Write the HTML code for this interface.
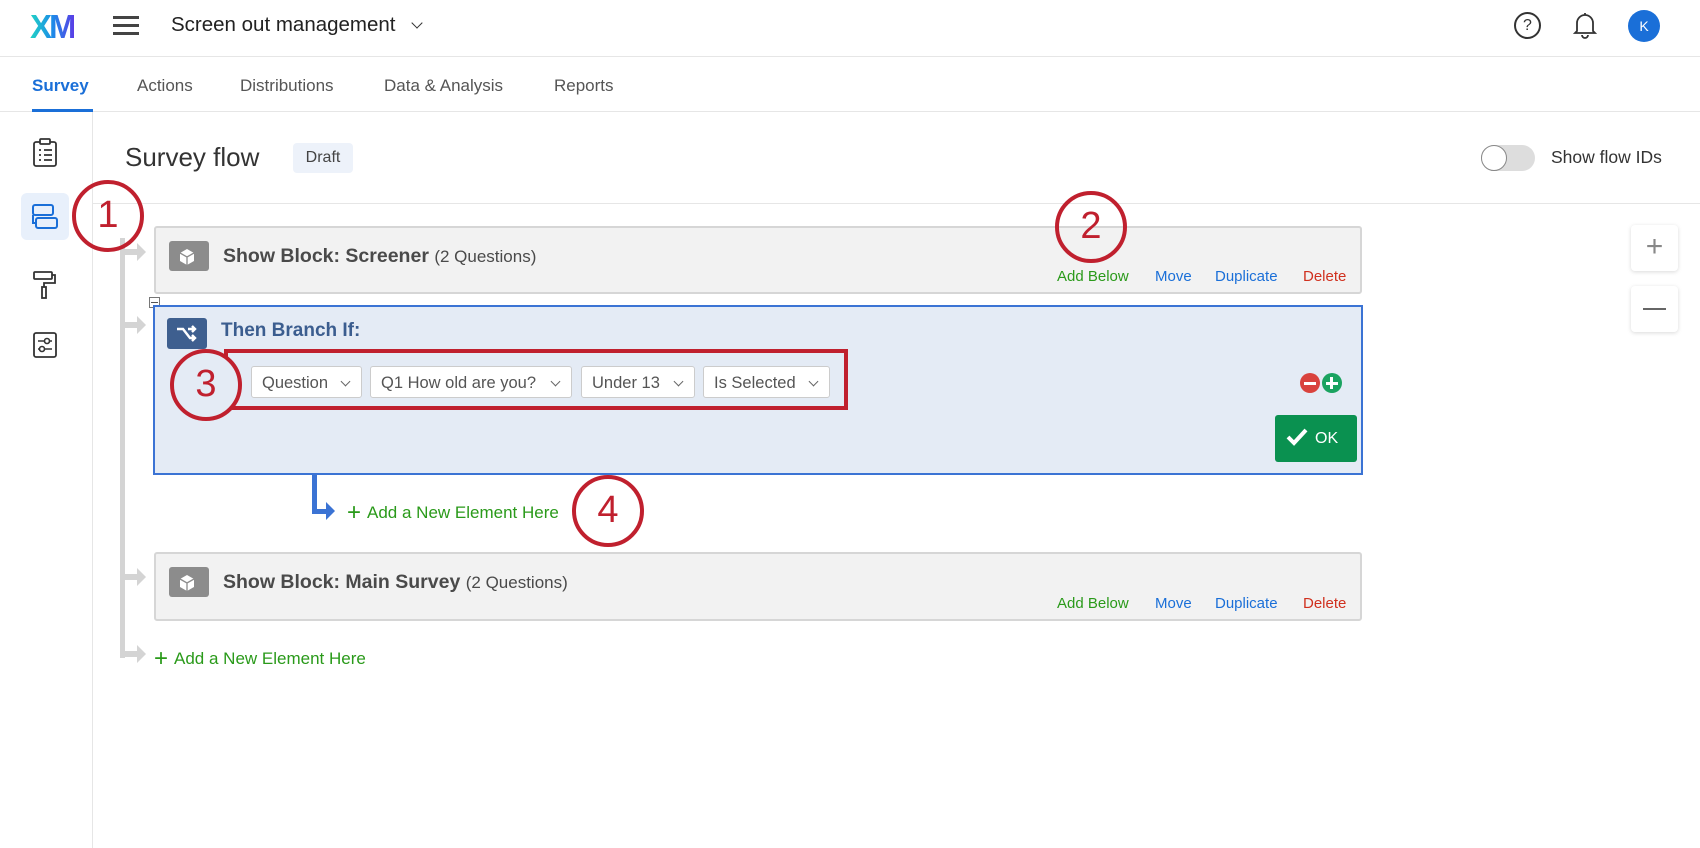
<!DOCTYPE html>
<html><head><meta charset="utf-8"><style>
*{box-sizing:border-box;margin:0;padding:0}
body{width:1700px;height:848px;position:relative;background:#fff;font-family:"Liberation Sans",sans-serif;color:#333;overflow:hidden}
.a{position:absolute}
.blk{position:absolute;left:154px;width:1208px;background:#f2f2f2;border:2px solid #d6d6d6;border-radius:3px}
.ib{position:absolute;left:13px;width:40px;height:30px;border-radius:3px;background:#8c8c8c}
.bt{position:absolute;left:67px;font-size:19.5px;font-weight:bold;color:#4a4a4a;white-space:nowrap}
.bt span{font-weight:normal;font-size:17px}
.lk{position:absolute;font-size:15px;white-space:nowrap}
.dd{position:absolute;top:366px;height:32px;background:#fff;border:1px solid #ccc;border-radius:3px;font-size:16.5px;color:#555;padding:7px 0 0 10px;white-space:nowrap}
.dd:after{content:"";position:absolute;right:12px;top:11px;width:6px;height:6px;border-right:1.3px solid #666;border-bottom:1.3px solid #666;transform:rotate(45deg)}
.circ{position:absolute;width:72px;height:72px;border:4px solid #c0202e;border-radius:50%;color:#c0202e;font-size:38px;text-align:center;line-height:62px;background:transparent}
.arr{position:absolute;left:125px;width:14px;height:6px;background:#d4d4d4}
.arr:after{content:"";position:absolute;left:12px;top:-6px;border-left:9px solid #d4d4d4;border-top:9px solid transparent;border-bottom:9px solid transparent}
.add{position:absolute;color:#2a9a1a;font-size:17px;white-space:nowrap}
.add b{font-size:24px;font-weight:normal;margin-right:6px;vertical-align:-2px}
</style></head><body>
<!-- header -->
<div class="a" style="left:0;top:56px;width:1700px;height:1px;background:#e6e6e6"></div>
<div class="a" style="left:30px;top:8px;font-size:33px;font-weight:bold;letter-spacing:-3px;background:linear-gradient(90deg,#21d3c4,#1c8de8 50%,#5a3ee6);-webkit-background-clip:text;color:transparent">XM</div>
<div class="a" style="left:113px;top:16px;width:26px;height:2.5px;background:#444;box-shadow:0 8px 0 #444,0 16px 0 #444"></div>
<div class="a" style="left:171px;top:13px;font-size:20.5px;color:#222">Screen out management</div>
<div class="a" style="left:413px;top:19px;width:8px;height:8px;border-right:1.5px solid #333;border-bottom:1.5px solid #333;transform:rotate(45deg)"></div>
<div class="a" style="left:1514px;top:12px;width:27px;height:27px;border:2px solid #333;border-radius:50%;text-align:center;font-size:16px;line-height:23px;color:#333">?</div>
<svg class="a" style="left:1573px;top:11px" width="24" height="28" viewBox="0 0 24 28"><path d="M4 20V12a8 8 0 0 1 16 0v8l2 2H2z M12 2v2 M9 24a3 3 0 0 0 6 0" fill="none" stroke="#333" stroke-width="1.8"/></svg>
<div class="a" style="left:1628px;top:10px;width:32px;height:32px;border-radius:50%;background:#1a6fd8;color:#fff;text-align:center;line-height:32px;font-size:14px">K</div>
<!-- tabs -->
<div class="a" style="left:0;top:111px;width:1700px;height:1px;background:#e6e6e6"></div>
<div class="a" style="left:32px;top:76px;font-size:17px;font-weight:bold;color:#1a6fd8">Survey</div>
<div class="a" style="left:32px;top:109px;width:61px;height:3px;background:#1a6fd8"></div>
<div class="a" style="left:137px;top:76px;font-size:17px;color:#555">Actions</div>
<div class="a" style="left:240px;top:76px;font-size:17px;color:#555">Distributions</div>
<div class="a" style="left:384px;top:76px;font-size:17px;color:#555">Data &amp; Analysis</div>
<div class="a" style="left:554px;top:76px;font-size:17px;color:#555">Reports</div>
<!-- sidebar -->
<div class="a" style="left:92px;top:112px;width:1px;height:736px;background:#e6e6e6"></div>
<svg class="a" style="left:32px;top:138px" width="26" height="30" viewBox="0 0 26 30"><rect x="2" y="4" width="22" height="24" rx="2" fill="none" stroke="#333" stroke-width="1.8"/><rect x="8" y="1" width="10" height="5" rx="1" fill="#fff" stroke="#333" stroke-width="1.8"/><path d="M7 12h2M12 12h8M7 17h2M12 17h8M7 22h2M12 22h8" stroke="#333" stroke-width="1.8"/></svg>
<div class="a" style="left:21px;top:193px;width:48px;height:47px;border-radius:6px;background:#e8f0fb"></div>
<svg class="a" style="left:31px;top:203px" width="28" height="28" viewBox="0 0 28 28"><rect x="2" y="2" width="20" height="10" rx="2" fill="none" stroke="#1a6fd8" stroke-width="2"/><rect x="5" y="15" width="21" height="10" rx="2" fill="none" stroke="#1a6fd8" stroke-width="2"/><path d="M2 12v8h3" fill="none" stroke="#1a6fd8" stroke-width="2"/></svg>
<svg class="a" style="left:32px;top:270px" width="26" height="30" viewBox="0 0 26 30"><rect x="2" y="2" width="18" height="7" rx="1" fill="none" stroke="#333" stroke-width="1.8"/><path d="M20 5h3v8H12v4" fill="none" stroke="#333" stroke-width="1.8"/><rect x="10" y="17" width="4" height="11" fill="none" stroke="#333" stroke-width="1.8"/></svg>
<svg class="a" style="left:32px;top:331px" width="26" height="28" viewBox="0 0 26 28"><rect x="2" y="2" width="22" height="24" rx="2" fill="none" stroke="#333" stroke-width="1.8"/><path d="M6 10h14M6 18h14" stroke="#333" stroke-width="1.6"/><circle cx="15" cy="10" r="2.5" fill="#fff" stroke="#333" stroke-width="1.6"/><circle cx="10" cy="18" r="2.5" fill="#fff" stroke="#333" stroke-width="1.6"/></svg>
<!-- title row -->
<div class="a" style="left:125px;top:142px;font-size:26px;color:#333">Survey flow</div>
<div class="a" style="left:293px;top:143px;width:60px;height:30px;background:#edf2fa;border-radius:4px;font-size:16px;color:#444;text-align:center;line-height:30px">Draft</div>
<div class="a" style="left:1481px;top:145px;width:54px;height:26px;border-radius:13px;background:#ddd"></div>
<div class="a" style="left:1481px;top:145px;width:26px;height:26px;border-radius:50%;background:#fff;border:1.5px solid #888"></div>
<div class="a" style="left:1551px;top:147px;font-size:17.5px;color:#333">Show flow IDs</div>
<div class="a" style="left:92px;top:203px;width:1608px;height:1px;background:#e6e6e6"></div>
<!-- zoom buttons -->
<div class="a" style="left:1631px;top:225px;width:47px;height:46px;background:#fff;border-radius:4px;box-shadow:0 1px 4px rgba(0,0,0,.15);text-align:center;line-height:44px;font-size:30px;color:#888;font-weight:300">+</div>
<div class="a" style="left:1631px;top:286px;width:47px;height:46px;background:#fff;border-radius:4px;box-shadow:0 1px 4px rgba(0,0,0,.15)"></div>
<div class="a" style="left:1643px;top:308px;width:23px;height:2px;background:#666"></div>
<!-- connector -->
<div class="a" style="left:120px;top:238px;width:5px;height:420px;background:#d4d4d4"></div>
<div class="arr" style="top:249px"></div>
<div class="arr" style="top:322px"></div>
<div class="arr" style="top:574px"></div>
<div class="arr" style="top:651px"></div>
<!-- screener block -->
<div class="blk" style="top:226px;height:68px">
 <div class="ib" style="top:13px"></div>
 <div class="bt" style="top:17px">Show Block: Screener <span>(2 Questions)</span></div>
 <div class="lk" style="left:901px;top:40px;color:#2a9a1a">Add Below</div>
 <div class="lk" style="left:999px;top:40px;color:#1a6fd8">Move</div>
 <div class="lk" style="left:1059px;top:40px;color:#1a6fd8">Duplicate</div>
 <div class="lk" style="left:1147px;top:40px;color:#d0301e">Delete</div>
</div>
<svg class="a" style="left:177px;top:247px" width="20" height="20" viewBox="0 0 20 20"><path d="M10 2l7 4v8l-7 4-7-4V6z" fill="#fff"/><path d="M3 6l7 4 7-4M10 10v8" stroke="#8c8c8c" stroke-width="1.3" fill="none"/></svg>
<!-- branch block -->
<div class="a" style="left:149px;top:297px;width:11px;height:11px;border:1px solid #777;background:#fff"></div>
<div class="a" style="left:151px;top:302px;width:7px;height:1px;background:#555"></div>
<div class="a" style="left:153px;top:305px;width:1210px;height:170px;background:#e4ebf5;border:2px solid #3b73d4"></div>
<div class="a" style="left:167px;top:318px;width:40px;height:31px;border-radius:3px;background:#3e5f8f"></div>
<svg class="a" style="left:175px;top:324px" width="24" height="20" viewBox="0 0 24 20"><path d="M2 5h6l7 9h5M13 5h7M17 2l3 3-3 3M17 11l3 3-3 3" fill="none" stroke="#fff" stroke-width="2.4"/></svg>
<div class="a" style="left:221px;top:320px;font-size:19px;font-weight:bold;color:#3b5d8f">Then Branch If:</div>
<div class="dd" style="left:251px;width:111px">Question</div>
<div class="dd" style="left:370px;width:202px">Q1 How old are you?</div>
<div class="dd" style="left:581px;width:114px">Under 13</div>
<div class="dd" style="left:703px;width:127px">Is Selected</div>
<div class="a" style="left:224px;top:349px;width:624px;height:61px;border:4px solid #c0202e"></div>
<div class="a" style="left:1300px;top:373px;width:20px;height:20px;border-radius:50%;background:#d9423d"></div>
<div class="a" style="left:1304px;top:382px;width:12px;height:3px;background:#fff"></div>
<div class="a" style="left:1322px;top:373px;width:20px;height:20px;border-radius:50%;background:#1aa360"></div>
<div class="a" style="left:1326px;top:382px;width:12px;height:3px;background:#fff"></div>
<div class="a" style="left:1330px;top:377px;width:3px;height:12px;background:#fff"></div>
<div class="a" style="left:1275px;top:415px;width:82px;height:47px;background:#0a9150;border-radius:3px;color:#fff;font-size:16px;line-height:47px;padding-left:40px">OK</div>
<svg class="a" style="left:1286px;top:427px" width="22" height="20" viewBox="0 0 22 20"><path d="M2 10l6 6L20 3" fill="none" stroke="#fff" stroke-width="4"/></svg>
<!-- blue arrow -->
<div class="a" style="left:312px;top:474px;width:5px;height:40px;background:#3b73d4"></div>
<div class="a" style="left:312px;top:509px;width:16px;height:5px;background:#3b73d4"></div>
<div class="a" style="left:326px;top:502px;border-left:9px solid #3b73d4;border-top:9px solid transparent;border-bottom:9px solid transparent"></div>
<div class="add" style="left:347px;top:499px"><b>+</b>Add a New Element Here</div>
<!-- main survey block -->
<div class="blk" style="top:552px;height:69px">
 <div class="ib" style="top:13px"></div>
 <div class="bt" style="top:17px">Show Block: Main Survey <span>(2 Questions)</span></div>
 <div class="lk" style="left:901px;top:41px;color:#2a9a1a">Add Below</div>
 <div class="lk" style="left:999px;top:41px;color:#1a6fd8">Move</div>
 <div class="lk" style="left:1059px;top:41px;color:#1a6fd8">Duplicate</div>
 <div class="lk" style="left:1147px;top:41px;color:#d0301e">Delete</div>
</div>
<svg class="a" style="left:177px;top:573px" width="20" height="20" viewBox="0 0 20 20"><path d="M10 2l7 4v8l-7 4-7-4V6z" fill="#fff"/><path d="M3 6l7 4 7-4M10 10v8" stroke="#8c8c8c" stroke-width="1.3" fill="none"/></svg>
<div class="add" style="left:154px;top:645px"><b>+</b>Add a New Element Here</div>
<!-- callouts -->
<div class="circ" style="left:72px;top:180px">1</div>
<div class="circ" style="left:1055px;top:191px">2</div>
<div class="circ" style="left:170px;top:349px;background:#e4ebf5">3</div>
<div class="circ" style="left:572px;top:475px;background:#fff">4</div>
</body></html>
